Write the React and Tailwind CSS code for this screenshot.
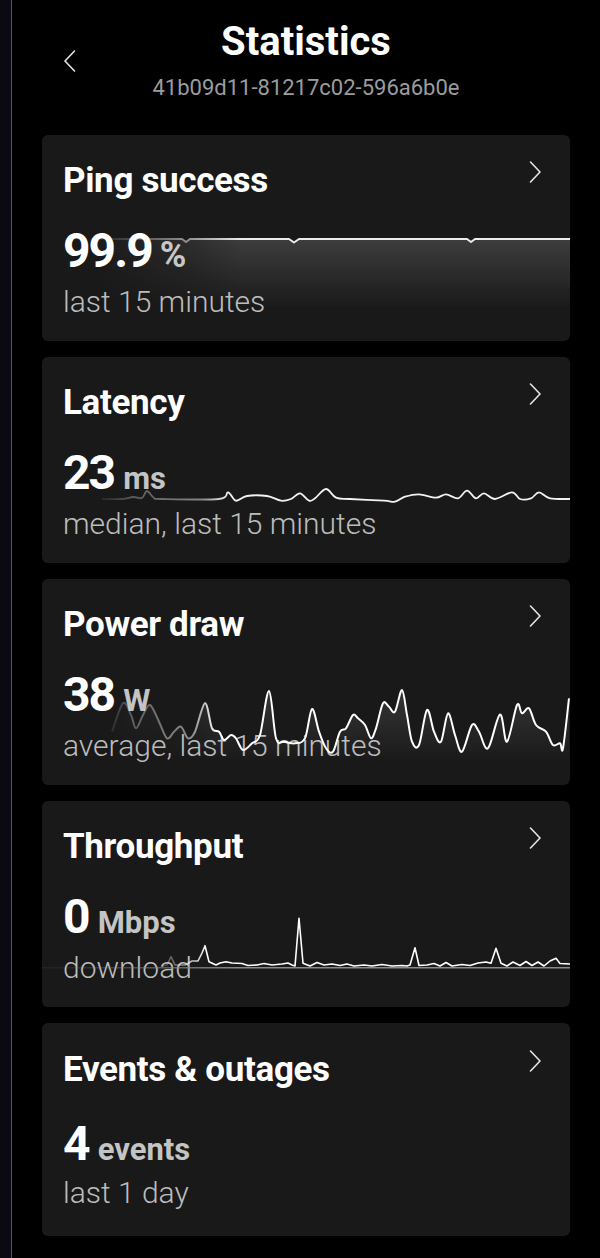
import React from "react";

const W = 528;
const H = 206;

function smooth(pts) {
  let d = `M${pts[0][0]},${pts[0][1]}`;
  for (let i = 0; i < pts.length - 1; i++) {
    const p0 = pts[i - 1] || pts[i];
    const p1 = pts[i];
    const p2 = pts[i + 1];
    const p3 = pts[i + 2] || p2;
    const c1x = p1[0] + (p2[0] - p0[0]) / 6;
    const c1y = p1[1] + (p2[1] - p0[1]) / 6;
    const c2x = p2[0] - (p3[0] - p1[0]) / 6;
    const c2y = p2[1] - (p3[1] - p1[1]) / 6;
    d += ` C${c1x.toFixed(1)},${c1y.toFixed(1)} ${c2x.toFixed(1)},${c2y.toFixed(1)} ${p2[0]},${p2[1]}`;
  }
  return d;
}

function poly(pts) {
  return "M" + pts.map((p) => `${p[0]},${p[1]}`).join(" L");
}

function FadeDefs({ id, stops }) {
  return (
    <>
      <linearGradient id={`g-${id}`} x1="0" y1="0" x2={W} y2="0" gradientUnits="userSpaceOnUse">
        {stops.map(([x, o], i) => (
          <stop key={i} offset={x / W} stopColor="#ffffff" stopOpacity={o} />
        ))}
      </linearGradient>
      <mask id={`m-${id}`} maskUnits="userSpaceOnUse" x="0" y="0" width={W} height={H}>
        <rect x="0" y="0" width={W} height={H} fill={`url(#g-${id})`} />
      </mask>
    </>
  );
}

const pingPts = [
  [40, 104], [140, 104], [144, 107], [148, 104], [247, 104], [252, 107.5], [257, 104],
  [425, 104], [429, 107], [433, 104], [528, 104],
];

const latencyPts = [
  [60, 142], [80, 142], [91, 140], [100, 141], [105, 134], [112, 141], [120, 142], [177, 142],
  [186, 135.3], [194, 143.7], [205, 139], [225, 139], [239, 143.7], [249, 142], [258, 136.3],
  [267, 143.7], [273, 141.3], [284, 132], [294, 140.7], [308, 142], [342, 143.7], [353, 144.7],
  [363, 139.7], [377, 137.3], [394, 140.7], [404, 137.3], [416, 141.3], [425, 133.7], [434, 141.3],
  [442, 136.3], [453, 142], [470, 135.3], [478, 142], [489, 141.3], [497, 135.3], [508, 141.3], [528, 142],
];

const powerPts = [
  [70, 152.7], [81, 124.3], [89, 136], [94, 149.3], [101, 136], [108, 126], [117, 142.7], [125, 159.3],
  [132, 152.7], [139, 147.7], [146, 159.3], [153, 152.7], [163, 124.3], [170, 149.3], [177, 152.7],
  [182, 161], [189, 156], [194, 159.3], [201, 171], [210, 164.3], [218, 156], [227, 112], [234, 159.3],
  [242, 162.7], [253, 164.3], [263, 159.3], [270, 130], [277, 152.7], [284, 169.3], [291, 172.7],
  [298, 152.7], [304, 149.3], [311, 136], [316, 139.3], [323, 146], [329, 159.3], [334, 149.3],
  [341, 124.3], [347, 127.7], [353, 132.7], [360, 111], [365, 136], [370, 162.7], [377, 166],
  [385, 131], [392, 152.7], [399, 162.7], [406, 134.3], [413, 156], [420, 172.7], [430, 146],
  [437, 152.7], [446, 169.3], [458, 135.5], [465, 162.7], [475, 126], [480, 134.3], [487, 129.3],
  [494, 146], [504, 152.7], [511, 166], [518, 164.3], [521, 169.3], [527, 119.3],
];

const tputPts = [
  [120, 165], [125, 164], [129, 155.7], [133, 164], [143, 164], [150, 160], [156, 160], [160, 152],
  [163, 144.7], [167, 160.7], [174, 164], [178, 162], [184, 160.7], [190, 162], [200, 162.5],
  [206, 164.5], [215, 164], [222, 162.5], [230, 164], [240, 163], [246, 162], [250, 164], [253, 165],
  [257, 117.3], [261, 162.3], [268, 165], [275, 161.5], [282, 164], [290, 163], [298, 164.5],
  [305, 163], [312, 165], [322, 164], [330, 165], [340, 163.5], [350, 165], [360, 164.5], [365, 165],
  [368, 164], [373, 146.7], [377, 164.5], [385, 164], [392, 162.5], [398, 165], [404, 161.5],
  [410, 165], [420, 163.5], [428, 164.5], [436, 162], [444, 161], [449, 162.3], [454, 147.3],
  [459, 162.3], [465, 165], [471, 161], [478, 164.5], [484, 160.5], [490, 164.5], [496, 161],
  [502, 165], [508, 160], [514, 157.3], [518, 162.5], [528, 163],
];

function PingChart() {
  const line = poly(pingPts);
  const area = `${line} L528,180 L40,180 Z`;
  return (
    <svg className="pointer-events-none absolute inset-0 h-full w-full" viewBox={`0 0 ${W} ${H}`}>
      <defs>
        <FadeDefs id="ping" stops={[[45, 0], [100, 0.3], [150, 0.6], [200, 1]]} />
        <linearGradient id="af-ping" x1="0" y1="104" x2="0" y2="175" gradientUnits="userSpaceOnUse">
          <stop offset="0" stopColor="#ffffff" stopOpacity="0.16" />
          <stop offset="1" stopColor="#ffffff" stopOpacity="0" />
        </linearGradient>
      </defs>
      <g mask="url(#m-ping)">
        <path d={area} fill="url(#af-ping)" />
        <path d={line} fill="none" stroke="#ececec" strokeWidth="2" strokeLinejoin="round" />
      </g>
    </svg>
  );
}

function LatencyChart() {
  const line = smooth(latencyPts);
  return (
    <svg className="pointer-events-none absolute inset-0 h-full w-full" viewBox={`0 0 ${W} ${H}`}>
      <defs>
        <FadeDefs id="lat" stops={[[50, 0], [90, 0.3], [160, 0.5], [185, 1]]} />
      </defs>
      <g mask="url(#m-lat)">
        <path d={line} fill="none" stroke="#f2f2f2" strokeWidth="1.8" strokeLinejoin="round" />
      </g>
    </svg>
  );
}

function PowerChart() {
  const line = smooth(powerPts);
  const area = `${line} L527,200 L70,200 Z`;
  return (
    <svg className="pointer-events-none absolute inset-0 h-full w-full" viewBox={`0 0 ${W} ${H}`}>
      <defs>
        <FadeDefs id="pow" stops={[[60, 0], [90, 0.3], [150, 0.5], [175, 1]]} />
        <linearGradient id="af-pow" x1="0" y1="110" x2="0" y2="185" gradientUnits="userSpaceOnUse">
          <stop offset="0" stopColor="#ffffff" stopOpacity="0.13" />
          <stop offset="1" stopColor="#ffffff" stopOpacity="0" />
        </linearGradient>
      </defs>
      <g mask="url(#m-pow)">
        <path d={area} fill="url(#af-pow)" />
        <path d={line} fill="none" stroke="#ffffff" strokeWidth="2" strokeLinejoin="round" />
      </g>
    </svg>
  );
}

function ThroughputChart() {
  const line = poly(tputPts);
  return (
    <svg className="pointer-events-none absolute inset-0 h-full w-full" viewBox={`0 0 ${W} ${H}`}>
      <defs>
        <FadeDefs id="tg" stops={[[20, 0.1], [120, 0.6], [200, 1]]} />
        <FadeDefs id="tw" stops={[[110, 0], [140, 0.5], [165, 1]]} />
      </defs>
      <g mask="url(#m-tg)">
        <path d="M0,166.7 L528,166.7" fill="none" stroke="#8a8a8a" strokeWidth="1.6" />
      </g>
      <g mask="url(#m-tw)">
        <path d={line} fill="none" stroke="#ffffff" strokeWidth="1.6" strokeLinejoin="round" />
      </g>
    </svg>
  );
}

function ChevronRight() {
  return (
    <svg width="12" height="22" viewBox="0 0 12 22" className="shrink-0">
      <polyline points="1.5,1 11,11 1.5,21" fill="none" stroke="#e4e4e4" strokeWidth="1.6" strokeLinecap="round" strokeLinejoin="round" />
    </svg>
  );
}

function ChevronLeft() {
  return (
    <svg width="12" height="22" viewBox="0 0 12 22">
      <polyline points="10.5,1 1,11 10.5,21" fill="none" stroke="#e4e4e4" strokeWidth="1.6" strokeLinecap="round" strokeLinejoin="round" />
    </svg>
  );
}

function Card({ title, value, unit, unitBig, sub, chart, last }) {
  return (
    <div className={`relative overflow-hidden rounded-[6px] bg-[#191919] ${last ? "h-[213px] pt-[27px]" : "h-[206px] pt-[26px]"}`}>
      <div className="flex items-start justify-between pl-[21px] pr-[29px]">
        <h2 className="text-[35px] font-bold leading-[40px] tracking-[-0.01em] text-white">{title}</h2>
        <ChevronRight />
      </div>
      <div className={`flex items-baseline pl-[21px] ${last ? "mt-[30px]" : "mt-[26px]"} ${unitBig ? "gap-[8px]" : "gap-[9px]"}`}>
        <span className="text-[48px] font-bold leading-[48px] tracking-[-0.04em] text-white">{value}</span>
        <span className={`font-bold text-[#c4c4c4] ${unitBig ? "text-[36px] leading-[36px] tracking-[-0.04em]" : "text-[31px] leading-[31px]"}`}>{unit}</span>
      </div>
      <div className={`pl-[21px] text-[30px] font-light leading-[34px] text-[#bcbcbc] ${last ? "mt-[8px]" : "mt-[10px]"}`}>{sub}</div>
      {chart}
    </div>
  );
}

export default function App() {
  return (
    <div className="flex min-h-[1258px] w-full bg-black font-['Roboto',sans-serif]">
      <div className="w-[12px] shrink-0 border-r border-[#56565f] bg-[#0b0a12]" />
      <div className="flex-1 px-[30px]">
        <header className="grid h-[135px] grid-cols-[1fr_auto_1fr] pt-[18px]">
          <div className="pl-[22px] pt-[32px]">
            <ChevronLeft />
          </div>
          <div className="flex flex-col items-center">
            <h1 className="text-[40px] font-bold leading-[48px] text-white">Statistics</h1>
            <div className="mt-[8px] text-[22px] leading-[28px] text-[#9c9c9c]">41b09d11-81217c02-596a6b0e</div>
          </div>
          <div />
        </header>
        <div className="flex flex-col gap-[16px]">
          <Card title="Ping success" value="99.9" unit="%" unitBig sub="last 15 minutes" chart={<PingChart />} />
          <Card title="Latency" value="23" unit="ms" sub="median, last 15 minutes" chart={<LatencyChart />} />
          <Card title="Power draw" value="38" unit="W" sub="average, last 15 minutes" chart={<PowerChart />} />
          <Card title="Throughput" value="0" unit="Mbps" sub="download" chart={<ThroughputChart />} />
          <Card title="Events & outages" value="4" unit="events" sub="last 1 day" last />
        </div>
      </div>
    </div>
  );
}
